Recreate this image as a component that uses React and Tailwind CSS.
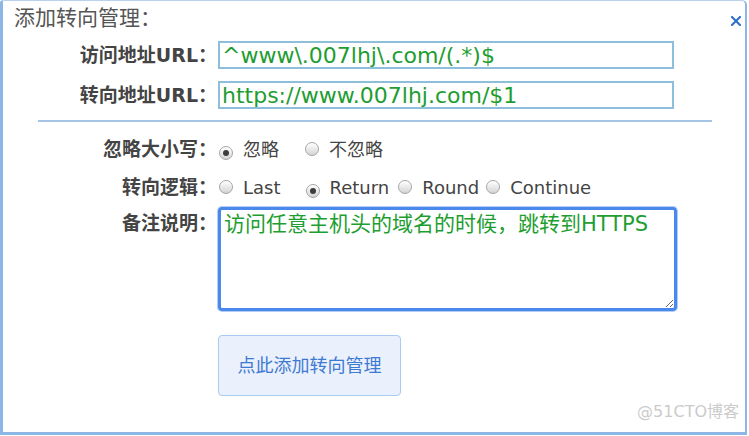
import React from "react";

const FONT = { fontFamily: '"DejaVu Sans", "Noto Sans CJK SC", sans-serif' };

function Radio({ checked }) {
  return (
    <span className="inline-flex w-[14px] h-[14px] shrink-0 items-center justify-center rounded-full border border-[#a4a4a4] bg-gradient-to-b from-white to-[#d4d4d4] shadow-[inset_0_1px_1px_rgba(255,255,255,0.9)]">
      {checked && <span className="block w-[6px] h-[6px] rounded-full bg-[#3c3c3c]" />}
    </span>
  );
}

function Label({ children, className = "" }) {
  return (
    <div className={"w-[218px] -ml-[3px] pr-[1px] shrink-0 text-right text-[19px] font-bold text-[#444] " + className}>
      {children}
    </div>
  );
}

export default function App() {
  return (
    <div className="w-[749px] h-[436px] bg-white" style={FONT}>
      <div className="relative w-[747px] h-[435px] border-l-[3px] border-r-[2px] border-b-[3px] border-t border-[#8db5e6] border-t-[#b9d1ef] rounded-tr-[5px] rounded-tl-[3px] flex flex-col">
        <div className="h-[36px] flex justify-between items-start pt-[5px] pl-[11px] pr-[4px]">
          <div className="text-[21px] leading-[24px] text-[#555]">添加转向管理：</div>
          <svg width="10" height="10" viewBox="0 0 10 10" className="mt-[10px]">
            <path d="M1 1 L9 9 M9 1 L1 9" stroke="#2b6fc6" strokeWidth="2" strokeLinecap="square" />
          </svg>
        </div>

        <div className="mt-[4px] flex items-center h-[28px]">
          <Label>访问地址URL：</Label>
          <input
            readOnly
            value="^www\.007lhj\.com/(.*)$"
            className="w-[456px] h-[28px] border-2 border-[#8dbfdd] px-[2px] text-[22px] leading-[24px] text-[#1e9d31] outline-none"
            style={FONT}
          />
        </div>
        <div className="mt-[12px] flex items-center h-[28px]">
          <Label>转向地址URL：</Label>
          <input
            readOnly
            value="https://www.007lhj.com/$1"
            className="w-[456px] h-[28px] border-2 border-[#8dbfdd] px-[2px] text-[22px] leading-[24px] text-[#1e9d31] outline-none"
            style={FONT}
          />
        </div>

        <div className="mt-[11px] ml-[35px] mr-[33px] h-[2px] bg-[#a6c5e4]" />

        <div className="mt-[13px] flex items-center h-[28px] text-[18px] text-[#444]">
          <Label>忽略大小写：</Label>
          <span className="ml-[1px]"><Radio checked /></span>
          <span className="ml-[10px]">忽略</span>
          <span className="ml-[26px]"><Radio /></span>
          <span className="ml-[10px]">不忽略</span>
        </div>

        <div className="mt-[10px] flex items-center h-[28px] text-[18px] text-[#444]">
          <Label>转向逻辑：</Label>
          <span className="ml-[1px]"><Radio /></span>
          <span className="ml-[10px]">Last</span>
          <span className="ml-[25px]"><Radio checked /></span>
          <span className="ml-[10px]">Return</span>
          <span className="ml-[9px]"><Radio /></span>
          <span className="ml-[10px]">Round</span>
          <span className="ml-[7px]"><Radio /></span>
          <span className="ml-[10px]">Continue</span>
        </div>

        <div className="mt-[6px] flex items-start">
          <Label className="pt-[3px] leading-[26px]">备注说明：</Label>
          <textarea
            readOnly
            defaultValue="访问任意主机头的域名的时候，跳转到HTTPS"
            className="w-[459px] h-[104px] border-[3px] border-[#4a88ec] rounded-[4px] shadow-[0_0_0_1px_#b3cdf5] px-[3px] py-[1px] text-[21px] leading-[26px] text-[#1e9d31] outline-none"
            style={FONT}
          />
        </div>

        <div className="mt-[24px] ml-[215px]">
          <button
            className="w-[183px] h-[61px] rounded-[4px] border border-[#a9cbf3] bg-[#ebf0fd] text-[18px] text-[#3d7ad2]"
            style={FONT}
          >
            点此添加转向管理
          </button>
        </div>

        <div className="absolute right-[6px] bottom-[8px] text-[16px] text-[#cbcbcb]">@51CTO博客</div>
      </div>
    </div>
  );
}
